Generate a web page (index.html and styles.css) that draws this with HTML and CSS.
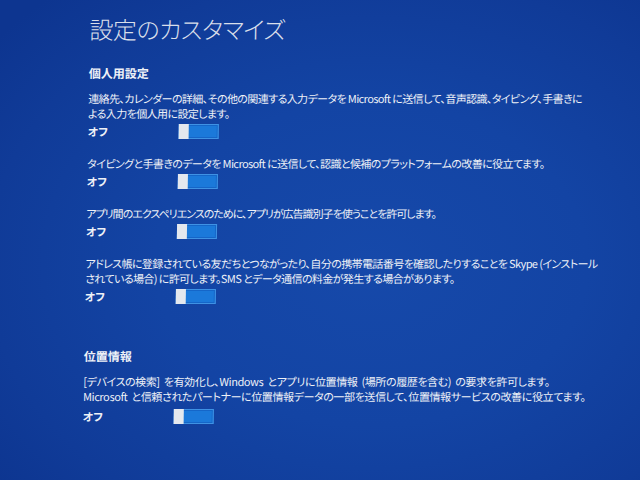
FILE: index.html
```html
<!DOCTYPE html>
<html lang="ja">
<head>
<meta charset="utf-8">
<title>設定のカスタマイズ</title>
<link rel="stylesheet" href="styles.css">
</head>
<body>
<main class="page">
  <h1 class="title">設定のカスタマイズ</h1>

  <section class="group">
    <h2 class="group-title">個人用設定</h2>
    <div class="items">
      <div class="item">
        <p class="desc">連絡先、カレンダーの詳細、その他の関連する入力データを Microsoft に送信して、音声認識、タイピング、手書きに<br>よる入力を個人用に設定します。</p>
        <div class="row"><span class="label">オフ</span><span class="toggle"><span class="thumb"></span></span></div>
      </div>
      <div class="item">
        <p class="desc">タイピングと手書きのデータを Microsoft に送信して、認識と候補のプラットフォームの改善に役立てます。</p>
        <div class="row"><span class="label">オフ</span><span class="toggle"><span class="thumb"></span></span></div>
      </div>
      <div class="item">
        <p class="desc desc-narrow">アプリ間のエクスペリエンスのために、アプリが広告識別子を使うことを許可します。</p>
        <div class="row"><span class="label">オフ</span><span class="toggle"><span class="thumb"></span></span></div>
      </div>
      <div class="item">
        <p class="desc">アドレス帳に登録されている友だちとつながったり、自分の携帯電話番号を確認したりすることを Skype (インストール<br>されている場合) に許可します。SMS とデータ通信の料金が発生する場合があります。</p>
        <div class="row"><span class="label">オフ</span><span class="toggle"><span class="thumb"></span></span></div>
      </div>
    </div>
  </section>

  <section class="group group-location">
    <h2 class="group-title">位置情報</h2>
    <div class="items">
      <div class="item">
        <p class="desc desc-wide">[デバイスの検索] を有効化し、Windows とアプリに位置情報 (場所の履歴を含む) の要求を許可します。<br>Microsoft と信頼されたパートナーに位置情報データの一部を送信して、位置情報サービスの改善に役立てます。</p>
        <div class="row row-last"><span class="label">オフ</span><span class="toggle"><span class="thumb"></span></span></div>
      </div>
    </div>
  </section>
</main>
</body>
</html>
```

FILE: styles.css
```css
html, body {
  margin: 0;
  padding: 0;
  width: 640px;
  height: 480px;
  overflow: hidden;
}

body {
  background: radial-gradient(ellipse 75% 75% at 58% 55%, #1649aa 0%, #1344a4 45%, #103b98 80%, #0d3590 100%);
  color: #eef1f7;
  font-family: "Noto Sans CJK JP", "Noto Sans", sans-serif;
  font-feature-settings: "palt";
}

.page {
  padding: 17px 0 0 90px;
  display: flex;
  flex-direction: column;
  transform: skewX(-1deg);
  transform-origin: 0 0;
}

.title {
  margin: 0;
  font-size: 24px;
  line-height: 24px;
  font-weight: 300;
  color: #d9dfea;
  letter-spacing: -0.5px;
}

.group {
  margin-top: 24px;
  display: flex;
  flex-direction: column;
  gap: 10px;
}

.group-location {
  margin-top: 44px;
}

.group-title {
  margin: 0;
  font-size: 12px;
  line-height: 16px;
  font-weight: 700;
  color: #eef1f7;
}

.items {
  display: flex;
  flex-direction: column;
  gap: 17px;
}

.item {
  display: flex;
  flex-direction: column;
  gap: 2px;
}

.desc {
  margin: 0;
  font-size: 11px;
  line-height: 15px;
  color: #eef1f7;
  white-space: nowrap;
  letter-spacing: -0.6px;
}

.desc-narrow {
  letter-spacing: -1px;
}

.desc-wide {
  letter-spacing: -0.4px;
  word-spacing: 2px;
}

.row {
  display: flex;
  align-items: center;
  height: 16px;
}

.row-last {
  margin-top: 2px;
}

.label {
  width: 91px;
  font-size: 11px;
  font-weight: 700;
  line-height: 16px;
}

.toggle {
  position: relative;
  display: block;
  width: 40px;
  height: 15px;
  box-sizing: border-box;
  border: 1px solid #3f92e4;
  background: #1b79da;
  box-shadow: inset 0 0 0 1px #1566c8;
}

.thumb {
  position: absolute;
  left: -1px;
  top: -1px;
  width: 10px;
  height: 15px;
  background: #e4e8ee;
}
```
